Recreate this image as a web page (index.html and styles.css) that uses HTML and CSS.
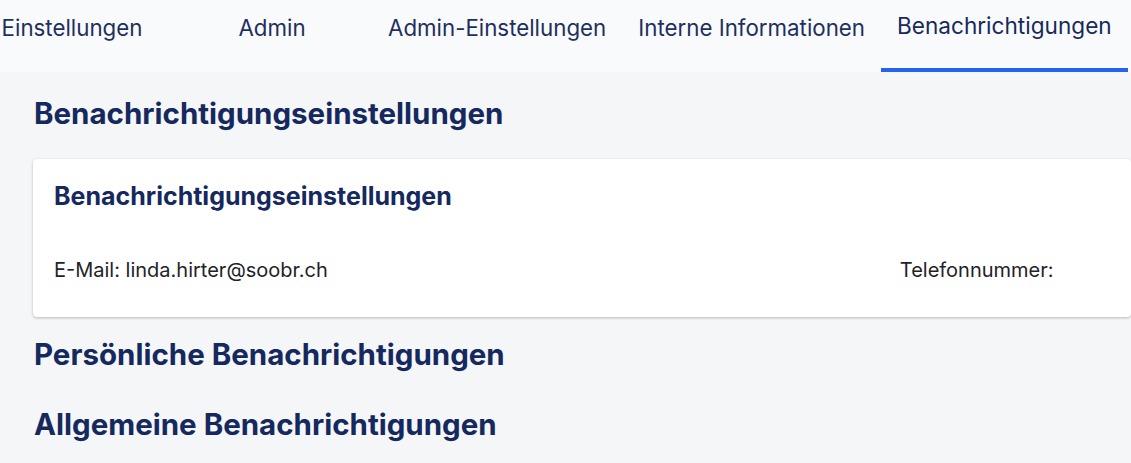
FILE: index.html
```html
<!DOCTYPE html>
<html lang="de">
<head>
    <meta charset="UTF-8">
    <meta name="viewport" content="width=device-width, initial-scale=1.0">
    <title>Benachrichtigungen</title>
    <link rel="stylesheet" href="styles.css">
</head>
<body>
    <nav class="tabs">
        <a class="tab">Einstellungen</a>
        <a class="tab">Admin</a>
        <a class="tab">Admin-Einstellungen</a>
        <a class="tab">Interne Informationen</a>
        <a class="tab active">Benachrichtigungen</a>
    </nav>
    <main class="content">
        <h2 class="section-title">Benachrichtigungseinstellungen</h2>
        <div class="card">
            <h3 class="card-title">Benachrichtigungseinstellungen</h3>
            <div class="card-row">
                <span>E-Mail: linda.hirter@soobr.ch</span>
                <span class="phone">Telefonnummer:</span>
            </div>
        </div>
        <h2 class="section-title">Persönliche Benachrichtigungen</h2>
        <h2 class="section-title">Allgemeine Benachrichtigungen</h2>
    </main>
</body>
</html>
```

FILE: styles.css
```css
body {
    margin: 0;
    padding: 0;
    font-family: Inter, "Noto Sans", sans-serif;
    background-color: #f4f6f8;
    color: #1b2d5f;
    overflow: hidden;
}

.tabs {
    display: flex;
    height: 72px;
    background-color: #f9fafc;
    margin-left: -28px;
}

.tab {
    box-sizing: border-box;
    display: flex;
    align-items: center;
    justify-content: center;
    min-width: 200px;
    padding: 0 16px 13px;
    font-size: 22.3px;
    color: #1e2f60;
    white-space: nowrap;
    border-bottom: 4px solid transparent;
    cursor: pointer;
}

.tab.active {
    color: #182a5a;
    font-size: 22.6px;
    border-bottom-color: #2563eb;
    padding-bottom: 17px;
}

.content {
    padding: 0 0 0 33px;
}

.section-title {
    margin: 0;
    padding: 23px 0 28px 1px;
    font-size: 29.5px;
    line-height: 36px;
    font-weight: 700;
    color: #15295e;
}

.card {
    background-color: #fff;
    border-radius: 4px;
    box-shadow: 0 1px 3px rgba(0, 0, 0, 0.25);
    padding: 22px 21px 35px;
}

.card-title {
    margin: 0 0 47px;
    font-size: 25px;
    line-height: 30px;
    font-weight: 700;
    color: #15295e;
}

.card-row {
    display: flex;
    font-size: 20px;
    line-height: 24px;
    color: #1f2328;
}

.phone {
    margin-left: 572px;
}

.card + .section-title {
    padding-top: 19px;
    padding-bottom: 16px;
}

.section-title + .section-title {
    padding-top: 18px;
}
```
